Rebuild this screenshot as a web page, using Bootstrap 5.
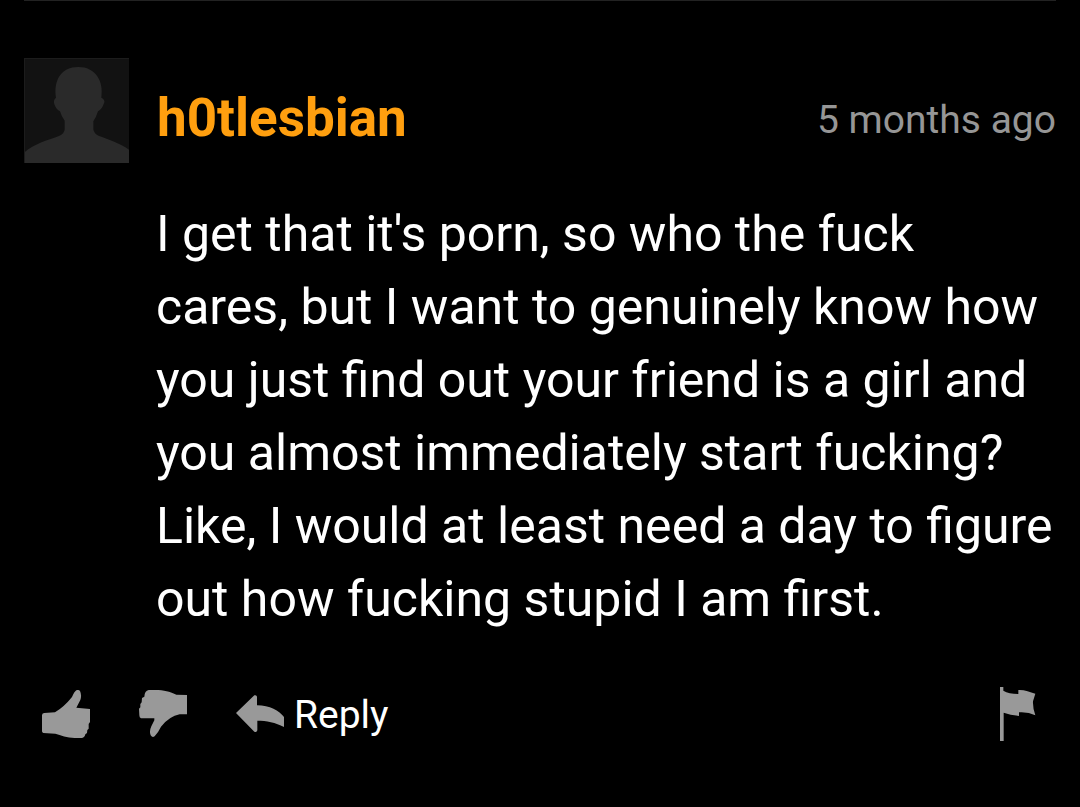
<!DOCTYPE html>
<html lang="en">
<head>
<meta charset="utf-8">
<meta name="viewport" content="width=device-width, initial-scale=1">
<title>Comment</title>
<link href="https://cdn.jsdelivr.net/npm/bootstrap@5.3.0/dist/css/bootstrap.min.css" rel="stylesheet">
<style>
  body { background: #000; color: #fff; font-family: Roboto, sans-serif; }
  .comment { border-top: 1px solid #222; padding-top: 57px; }
  .comment-head { gap: 28px; }
  .comment-meta { padding-top: 14px; }
  .avatar { width: 105px; height: 105px; }
  .username { color: #ff9f0f; font-size: 53px; line-height: 60px; font-weight: 700; }
  .posted { color: #969696; font-size: 39px; line-height: 48px; }
  .comment-text { margin: 35px 0 0 132px; font-size: 50px; line-height: 73px; }
  .actions { margin-top: 49px; padding: 0 20px 0 18px; gap: 49px; color: #999; }
  .actions .btn { --bs-btn-color: #999; --bs-btn-hover-color: #bbb; --bs-btn-active-color: #bbb; line-height: 1; }
  .reply-label { color: #fff; font-size: 39px; line-height: 56px; padding: 2px 0 0 10px; }
</style>
</head>
<body>
<main class="container-fluid px-4">
  <article class="comment">
    <header class="comment-head d-flex align-items-center">
      <svg class="avatar flex-shrink-0" viewBox="0 0 315 315" role="img" aria-label="User avatar">
        <rect width="315" height="315" fill="#121212"/>
        <path d="M0 315V284C30 257 75 245 105 234Q121 228 122 214V188Q113 177 108 160Q97 155 91 139Q87 126 96 119C88 66 112 27 163 27C214 27 240 68 232 119Q243 125 241 133Q234 155 222 160Q217 177 208 190V214Q210 228 225 234C255 245 287 255 315 275V315Z" fill="#2a2a2a"/>
        <path d="M1 315V1H315" fill="none" stroke="#1c1c1c" stroke-width="4"/>
      </svg>
      <div class="comment-meta d-flex align-items-center justify-content-between flex-grow-1">
        <a href="#" class="username text-decoration-none">h0tlesbian</a>
        <time class="posted text-nowrap pt-1">5 months ago</time>
      </div>
    </header>
    <p class="comment-text">I get that it's porn, so who the fuck cares, but I want to genuinely know how you just find out your friend is a girl and you almost immediately start fucking? Like, I would at least need a day to figure out how fucking stupid I am first.</p>
    <footer class="actions d-flex align-items-center">
      <button type="button" class="btn p-0 border-0" aria-label="Like">
        <svg class="d-block" width="48" height="48" viewBox="0 0 144 144" fill="currentColor"><path d="M0 75Q1 69 7 69L39 67Q67 50 90 21Q97 5 103 1Q109-2 114 3Q120 16 115 30L103 53L144 57V96L140 102V116L136 120L135 129L130 133Q128 143 120 144H98C75 143 56 136 40 131L4 129Q0 128 0 124Z"/></svg>
      </button>
      <button type="button" class="btn p-0 border-0" aria-label="Dislike">
        <svg class="d-block" width="48" height="48" viewBox="0 0 144 144" fill="currentColor"><path d="M144 15V73H122Q91 79 66 110Q58 126 50 135Q42 146 35 136Q30 124 37 109L46 91V85H6Q1 83 1 76L0 56L4 52V42L8 37L9 24L16 20Q17 2 29 0H58C83 2 100 8 112 14Z"/></svg>
      </button>
      <button type="button" class="btn p-0 border-0 d-flex align-items-center">
        <svg width="48" height="38" viewBox="0 0 144 114" fill="currentColor" aria-hidden="true"><path d="M0 54L55 1Q62-1 63 5V31C101 31 130 48 144 66V96C119 82 91 77 64 77V106Q62 114 55 110Z"/></svg>
        <span class="reply-label">Reply</span>
      </button>
      <button type="button" class="btn p-0 border-0 ms-auto" aria-label="Flag comment">
        <svg class="d-block" width="36" height="54" viewBox="0 0 108 162" fill="currentColor"><path d="M0 0H10V11Q27 21 55 21V9C73 8 89 15 106 20L99 43Q98 62 106 85Q84 74 57 76V87Q33 84 11 77V162H0Z"/></svg>
      </button>
    </footer>
  </article>
</main>
<script src="https://cdn.jsdelivr.net/npm/bootstrap@5.3.0/dist/js/bootstrap.bundle.min.js"></script>
</body>
</html>
